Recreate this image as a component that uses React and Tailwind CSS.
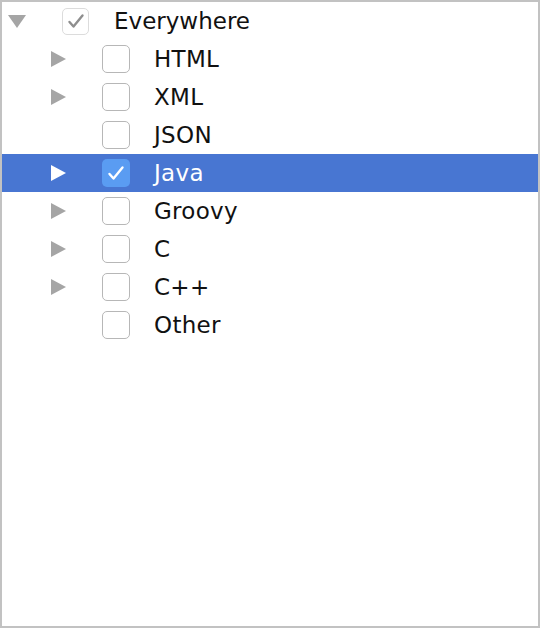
import React from 'react';

const items = [
  { label: 'HTML', arrow: true },
  { label: 'XML', arrow: true },
  { label: 'JSON', arrow: false },
  { label: 'Java', arrow: true, selected: true, checked: true },
  { label: 'Groovy', arrow: true },
  { label: 'C', arrow: true },
  { label: 'C++', arrow: true },
  { label: 'Other', arrow: false },
];

function Arrow({ down, white }) {
  const fill = white ? '#ffffff' : '#a5a5a5';
  if (down) {
    return (
      <svg width="18" height="14" viewBox="0 0 18 14">
        <path d="M0 1 L18 1 L9 14 Z" fill={fill} />
      </svg>
    );
  }
  return (
    <svg width="16" height="16" viewBox="0 0 16 16">
      <path d="M1 0 L16 8 L1 16 Z" fill={fill} />
    </svg>
  );
}

function Check({ color }) {
  return (
    <svg width="18" height="16" viewBox="0 0 18 16">
      <path d="M2.5 9 L6.5 13.5 L15.5 2.5" fill="none" stroke={color} strokeWidth="2.4" strokeLinecap="round" strokeLinejoin="round" />
    </svg>
  );
}

export default function App() {
  return (
    <div className="w-[540px] h-[628px] bg-white border-2 border-[#c2c2c2] overflow-hidden" style={{ fontFamily: '"DejaVu Sans", sans-serif' }}>
      <div className="flex items-center h-[38px]">
        <div className="w-[60px] pl-[6px] flex items-center">
          <Arrow down />
        </div>
        <div className="w-[27px] h-[27px] rounded-[5px] border border-[#dcdcdc] bg-white flex items-center justify-center">
          <Check color="#8e8e8e" />
        </div>
        <span className="ml-[25px] text-[23px] text-[#111]">Everywhere</span>
      </div>
      {items.map((it) => (
        <div
          key={it.label}
          className={`flex items-center h-[38px] ${it.selected ? 'bg-[#4876d2]' : ''}`}
        >
          <div className="w-[100px] pl-[48px] flex items-center">
            {it.arrow && <Arrow white={it.selected} />}
          </div>
          {it.checked ? (
            <div className="w-[28px] h-[28px] rounded-[5px] bg-[#5a9cf2] flex items-center justify-center">
              <Check color="#ffffff" />
            </div>
          ) : (
            <div className="w-[28px] h-[28px] rounded-[5px] border border-[#b7b7b7] bg-white" />
          )}
          <span className={`ml-[24px] text-[23px] tracking-[0.3px] ${it.selected ? 'text-white' : 'text-[#111]'}`}>
            {it.label}
          </span>
        </div>
      ))}
    </div>
  );
}
